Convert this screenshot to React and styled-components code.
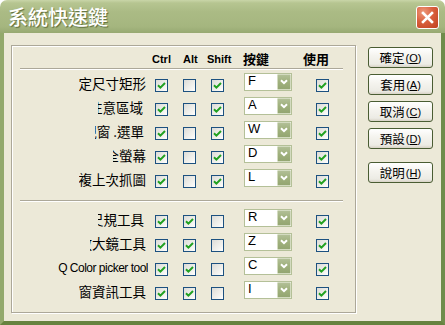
import React from "react";
import styled, { createGlobalStyle } from "styled-components";

const GlobalStyle = createGlobalStyle`
  html, body { margin: 0; padding: 0; background: #fff; overflow: hidden; }
  body { font-family: "Liberation Sans", "Noto Sans CJK TC", sans-serif; color: #000; }
`;

const Window = styled.div`
  width: 445px;
  height: 325px;
  display: flex;
  flex-direction: column;
  border-radius: 7px 7px 0 0;
  overflow: hidden;
`;

const TitleBar = styled.div`
  height: 33px;
  flex: none;
  box-sizing: border-box;
  display: flex;
  align-items: center;
  justify-content: space-between;
  padding: 0 6px 0 8px;
  background: linear-gradient(#c9d5a8 0, #b6c591 3px, #abbb85 35%, #a5b67f 80%, #97a972 100%);
`;

const Title = styled.span`
  font-family: "Noto Sans CJK TC", sans-serif;
  font-size: 20px;
  font-weight: 500;
  line-height: 22px;
  color: #fff;
  text-shadow: 1px 1px 1px #5d6d3c;
  margin-top: 1px;
`;

const CloseButton = styled.div`
  width: 23px;
  height: 23px;
  box-sizing: border-box;
  border: 1px solid #fff;
  border-radius: 3px;
  background: radial-gradient(circle at 30% 25%, #ee9a7c 0, #d9603e 45%, #c0401f 100%);
  display: flex;
  align-items: center;
  justify-content: center;
  margin-top: 1px;
`;

const Client = styled.div`
  flex: 1;
  display: flex;
  align-items: flex-start;
  box-sizing: border-box;
  background: #ece9d8;
  border-left: 4px solid #93a96c;
  border-right: 4px solid #6f8c4b;
  border-bottom: 4px solid #66833f;
`;

const Group = styled.div`
  width: 345px;
  height: 268px;
  box-sizing: border-box;
  margin: 12px 0 0 7px;
  padding-left: 8px;
  border: 1px solid #aca899;
  box-shadow: inset 1px 1px 0 #fff, 1px 1px 0 #fff;
`;

const Grid = styled.div`
  display: grid;
  grid-template-columns: 128px 28px 28px 33px 72px 34px;
`;

const Head = styled.span`
  height: 22px;
  box-sizing: border-box;
  padding-top: 5px;
  line-height: 16px;
  margin-left: ${(p) => p.$x || 0}px;
  font-family: ${(p) => (p.$cjk ? '"Noto Sans CJK TC", sans-serif' : '"Liberation Sans", sans-serif')};
  font-size: ${(p) => (p.$cjk ? 13 : 11)}px;
  font-weight: bold;
  white-space: nowrap;
`;

const Rule = styled.div`
  grid-column: 1 / -1;
  height: 0;
  border-top: 1px solid #aca899;
  border-bottom: 1px solid #fff;
  margin: ${(p) => p.$top}px 0 ${(p) => p.$bottom}px;
`;

const Label = styled.div`
  height: 24px;
  box-sizing: border-box;
  justify-self: end;
  width: ${(p) => (p.$w ? `${p.$w}px` : "auto")};
  margin-right: ${(p) => p.$mr}px;
  display: flex;
  justify-content: flex-end;
  overflow: hidden;
  white-space: nowrap;
  padding-top: ${(p) => (p.$latin ? 4 : 3)}px;
  line-height: 14px;
  font-family: ${(p) => (p.$latin ? '"Liberation Sans", sans-serif' : '"Noto Sans CJK TC", sans-serif')};
  font-size: ${(p) => (p.$latin ? 12 : 13.5)}px;
  letter-spacing: ${(p) => (p.$latin ? -0.5 : 0)}px;
  span { flex: none; }
`;

const Box = styled.span`
  width: 13px;
  height: 13px;
  box-sizing: border-box;
  margin: 6px 0 0 7px;
  border: 1px solid #1c5180;
  background: linear-gradient(135deg, #dcdcd7 0%, #f4f4f0 70%, #fff 100%);
  display: flex;
  align-items: center;
  justify-content: center;
`;

const Combo = styled.div`
  width: 48px;
  height: 18px;
  box-sizing: border-box;
  margin-left: 7px;
  border: 1px solid #b4c098;
  background: #fff;
  display: flex;
`;

const ComboText = styled.span`
  flex: 1;
  padding-left: 3px;
  font-size: 13px;
  line-height: 14px;
`;

const DropButton = styled.span`
  width: 14px;
  height: 16px;
  box-sizing: border-box;
  border: 1px solid #d3dbc0;
  border-radius: 1px;
  background: linear-gradient(#b1bf96, #9fb07c 50%, #94a672);
  display: flex;
  align-items: center;
  justify-content: center;
`;

const Buttons = styled.div`
  display: flex;
  flex-direction: column;
  margin: 14px 0 0 12px;
`;

const Btn = styled.div`
  width: 65px;
  height: 21px;
  box-sizing: border-box;
  margin-top: ${(p) => p.$gap}px;
  border: 1px solid #4a5d33;
  border-radius: 3px;
  background: linear-gradient(#fff 0, #f5f4ef 40%, #ecebe4 85%, #d8d3c6 100%);
  display: flex;
  align-items: center;
  justify-content: center;
  font-size: 12.5px;
  line-height: 14px;
  white-space: nowrap;
  font-family: "Noto Sans CJK TC", sans-serif;
  small {
    font-family: "Liberation Sans", sans-serif;
    font-size: 11px;
    margin-left: 1px;
  }
`;

const Check = () => (
  <svg width="9" height="9" viewBox="0 0 9 9">
    <path d="M1 4.2 L3.4 6.6 L8 2" stroke="#21a121" strokeWidth="2" fill="none" />
  </svg>
);

const CheckBox = ({ on }) => <Box>{on && <Check />}</Box>;

const KeyCombo = ({ k }) => (
  <Combo>
    <ComboText>{k}</ComboText>
    <DropButton>
      <svg width="8" height="6" viewBox="0 0 8 6">
        <path d="M1 1.2 L4 4.2 L7 1.2" stroke="#fff" strokeWidth="2" fill="none" />
      </svg>
    </DropButton>
  </Combo>
);

const upper = [
  { text: "定尺寸矩形", end: 146, k: "F" },
  { text: "注意區域", clip: 98, end: 143, k: "A" },
  { text: "視窗 .選單", clip: 95, end: 144, k: "W" },
  { text: "全螢幕", clip: 113, end: 146, k: "D" },
  { text: "複上次抓圖", end: 146, k: "L" },
];

const lower = [
  { text: "尺規工具", clip: 98, end: 144, k: "R" },
  { text: "放大鏡工具", clip: 90, end: 146, k: "Z" },
  { text: "Q Color picker tool", end: 148, k: "C", latin: true },
  { text: "窗資訊工具", end: 146, k: "I" },
];

const Row = ({ row, checks }) => (
  <>
    <Label $w={row.clip ? row.end - row.clip : 0} $mr={148 - row.end} $latin={row.latin}>
      <span>{row.text}</span>
    </Label>
    <CheckBox on={checks[0]} />
    <CheckBox on={checks[1]} />
    <CheckBox on={checks[2]} />
    <KeyCombo k={row.k} />
    <CheckBox on />
  </>
);

export default function App() {
  return (
    <Window>
      <GlobalStyle />
      <TitleBar>
        <Title>系統快速鍵</Title>
        <CloseButton>
          <svg width="13" height="13" viewBox="0 0 13 13">
            <path d="M2 2 L11 11 M11 2 L2 11" stroke="#fff" strokeWidth="2.6" strokeLinecap="square" />
          </svg>
        </CloseButton>
      </TitleBar>
      <Client>
        <Group>
          <Grid>
            <span />
            <Head $x={4}>Ctrl</Head>
            <Head $x={7}>Alt</Head>
            <Head $x={3}>Shift</Head>
            <Head $x={6} $cjk>按鍵</Head>
            <Head $x={-6} $cjk>使用</Head>
            <Rule $top={0} $bottom={3} />
            {upper.map((r) => (
              <Row key={r.k} row={r} checks={[true, false, true]} />
            ))}
            <Rule $top={7} $bottom={7} />
            {lower.map((r) => (
              <Row key={r.k} row={r} checks={[true, true, false]} />
            ))}
          </Grid>
        </Group>
        <Buttons>
          <Btn $gap={0}>確定<small>(<u>O</u>)</small></Btn>
          <Btn $gap={6}>套用<small>(<u>A</u>)</small></Btn>
          <Btn $gap={6}>取消<small>(<u>C</u>)</small></Btn>
          <Btn $gap={6}>預設<small>(<u>D</u>)</small></Btn>
          <Btn $gap={13}>說明<small>(<u>H</u>)</small></Btn>
        </Buttons>
      </Client>
    </Window>
  );
}
